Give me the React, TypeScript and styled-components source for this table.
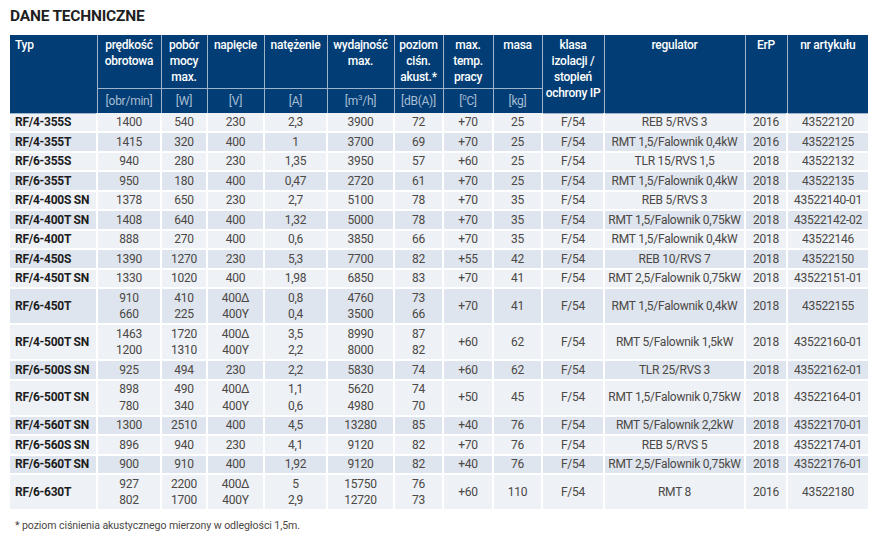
import React from 'react';
import styled, { createGlobalStyle } from 'styled-components';

type Val = string | [string, string];

interface Row {
  typ: string;
  cells: Val[];
}

const widths = [87, 64, 46, 57, 63, 67, 49, 50, 49, 62, 141, 42, 81];

const rows: Row[] = [
  { typ: 'RF/4-355S', cells: ['1400', '540', '230', '2,3', '3900', '72', '+70', '25', 'F/54', 'REB 5/RVS 3', '2016', '43522120'] },
  { typ: 'RF/4-355T', cells: ['1415', '320', '400', '1', '3700', '69', '+70', '25', 'F/54', 'RMT 1,5/Falownik 0,4kW', '2016', '43522125'] },
  { typ: 'RF/6-355S', cells: ['940', '280', '230', '1,35', '3950', '57', '+60', '25', 'F/54', 'TLR 15/RVS 1,5', '2018', '43522132'] },
  { typ: 'RF/6-355T', cells: ['950', '180', '400', '0,47', '2720', '61', '+70', '25', 'F/54', 'RMT 1,5/Falownik 0,4kW', '2018', '43522135'] },
  { typ: 'RF/4-400S SN', cells: ['1378', '650', '230', '2,7', '5100', '78', '+70', '35', 'F/54', 'REB 5/RVS 3', '2018', '43522140-01'] },
  { typ: 'RF/4-400T SN', cells: ['1408', '640', '400', '1,32', '5000', '78', '+70', '35', 'F/54', 'RMT 1,5/Falownik 0,75kW', '2018', '43522142-02'] },
  { typ: 'RF/6-400T', cells: ['888', '270', '400', '0,6', '3850', '66', '+70', '35', 'F/54', 'RMT 1,5/Falownik 0,4kW', '2018', '43522146'] },
  { typ: 'RF/4-450S', cells: ['1390', '1270', '230', '5,3', '7700', '82', '+55', '42', 'F/54', 'REB 10/RVS 7', '2018', '43522150'] },
  { typ: 'RF/4-450T SN', cells: ['1330', '1020', '400', '1,98', '6850', '83', '+70', '41', 'F/54', 'RMT 2,5/Falownik 0,75kW', '2018', '43522151-01'] },
  {
    typ: 'RF/6-450T',
    cells: [['910', '660'], ['410', '225'], ['400Δ', '400Y'], ['0,8', '0,4'], ['4760', '3500'], ['73', '66'], '+70', '41', 'F/54', 'RMT 1,5/Falownik 0,4kW', '2018', '43522155'],
  },
  {
    typ: 'RF/4-500T SN',
    cells: [['1463', '1200'], ['1720', '1310'], ['400Δ', '400Y'], ['3,5', '2,2'], ['8990', '8000'], ['87', '82'], '+60', '62', 'F/54', 'RMT 5/Falownik 1,5kW', '2018', '43522160-01'],
  },
  { typ: 'RF/6-500S SN', cells: ['925', '494', '230', '2,2', '5830', '74', '+60', '62', 'F/54', 'TLR 25/RVS 3', '2018', '43522162-01'] },
  {
    typ: 'RF/6-500T SN',
    cells: [['898', '780'], ['490', '340'], ['400Δ', '400Y'], ['1,1', '0,6'], ['5620', '4980'], ['74', '70'], '+50', '45', 'F/54', 'RMT 1,5/Falownik 0,75kW', '2018', '43522164-01'],
  },
  { typ: 'RF/4-560T SN', cells: ['1300', '2510', '400', '4,5', '13280', '85', '+40', '76', 'F/54', 'RMT 5/Falownik 2,2kW', '2018', '43522170-01'] },
  { typ: 'RF/6-560S SN', cells: ['896', '940', '230', '4,1', '9120', '82', '+70', '76', 'F/54', 'REB 5/RVS 5', '2018', '43522174-01'] },
  { typ: 'RF/6-560T SN', cells: ['900', '910', '400', '1,92', '9120', '82', '+40', '76', 'F/54', 'RMT 2,5/Falownik 0,75kW', '2018', '43522176-01'] },
  {
    typ: 'RF/6-630T',
    cells: [['927', '802'], ['2200', '1700'], ['400Δ', '400Y'], ['5', '2,9'], ['15750', '12720'], ['76', '73'], '+60', '110', 'F/54', 'RMT 8', '2016', '43522180'],
  },
];

export default function App() {
  return (
    <>
      <GlobalStyle />
      <Page>
        <Title>DANE TECHNICZNE</Title>
        <Table>
          <colgroup>
            {widths.map((w, i) => (
              <col key={i} style={{ width: w }} />
            ))}
          </colgroup>
          <thead>
            <tr>
              <HeadCell rowSpan={2} $left>
                Typ
              </HeadCell>
              <HeadCell>
                prędkość
                <br />
                obrotowa
              </HeadCell>
              <HeadCell>
                pobór
                <br />
                mocy
                <br />
                max.
              </HeadCell>
              <HeadCell>napięcie</HeadCell>
              <HeadCell>natężenie</HeadCell>
              <HeadCell>
                wydajność
                <br />
                max.
              </HeadCell>
              <HeadCell>
                poziom
                <br />
                ciśn.
                <br />
                akust.*
              </HeadCell>
              <HeadCell>
                max.
                <br />
                temp.
                <br />
                pracy
              </HeadCell>
              <HeadCell>masa</HeadCell>
              <HeadCell rowSpan={2}>
                klasa
                <br />
                izolacji /
                <br />
                stopień
                <br />
                ochrony IP
              </HeadCell>
              <HeadCell rowSpan={2}>regulator</HeadCell>
              <HeadCell rowSpan={2}>ErP</HeadCell>
              <HeadCell rowSpan={2}>nr artykułu</HeadCell>
            </tr>
            <tr>
              <UnitCell>[obr/min]</UnitCell>
              <UnitCell>[W]</UnitCell>
              <UnitCell>[V]</UnitCell>
              <UnitCell>[A]</UnitCell>
              <UnitCell>
                [m<sup>3</sup>/h]
              </UnitCell>
              <UnitCell>[dB(A)]</UnitCell>
              <UnitCell>
                [<sup>0</sup>C]
              </UnitCell>
              <UnitCell>[kg]</UnitCell>
            </tr>
          </thead>
          <tbody>
            {rows.map((r, i) => (
              <BodyRow key={r.typ} $alt={i % 2 === 1}>
                <TypeCell>{r.typ}</TypeCell>
                {r.cells.map((c, j) => (
                  <Cell key={j}>
                    {Array.isArray(c) ? (
                      <>
                        <Line>{c[0]}</Line>
                        <Line>{c[1]}</Line>
                      </>
                    ) : (
                      c
                    )}
                  </Cell>
                ))}
              </BodyRow>
            ))}
          </tbody>
        </Table>
        <Footnote>* poziom ciśnienia akustycznego mierzony w odległości 1,5m.</Footnote>
      </Page>
    </>
  );
}

const GlobalStyle = createGlobalStyle`
  html, body {
    margin: 0;
    padding: 0;
    background: #fff;
  }
  body {
    font-family: Roboto, "Noto Sans", Arial, sans-serif;
  }
`;

const Page = styled.div`
  width: 879px;
  height: 539px;
  padding: 7px 0 0 10px;
  box-sizing: border-box;
  overflow: hidden;
`;

const Title = styled.h1`
  margin: 0 0 10px;
  font-size: 15.5px;
  line-height: 18px;
  font-weight: 700;
  color: #1f1f1f;
  letter-spacing: -0.2px;
`;

const Table = styled.table`
  width: 858px;
  table-layout: fixed;
  border-collapse: collapse;
  border-bottom: 2px solid #7d98b6;
  font-size: 12px;
  letter-spacing: -0.25px;
`;

const HeadCell = styled.th<{ $left?: boolean }>`
  background: #023e75;
  color: #fff;
  font-weight: 500;
  line-height: 16px;
  height: 48px;
  padding: 2px 2px 3px ${(p) => (p.$left ? '5px' : '2px')};
  text-align: ${(p) => (p.$left ? 'left' : 'center')};
  vertical-align: top;
  border: 1.5px solid #9fb4cb;
  border-top: none;
  &:first-child {
    border-left: none;
  }
  &:last-child {
    border-right: none;
  }
`;

const UnitCell = styled.th`
  background: #023e75;
  color: #a9bdd4;
  font-weight: 400;
  line-height: 16px;
  height: 20px;
  padding: 2px;
  text-align: center;
  vertical-align: middle;
  border: 1.5px solid #9fb4cb;
  border-bottom: none;

  sup {
    font-size: 8px;
    line-height: 0;
    vertical-align: 5px;
  }
`;

const BodyRow = styled.tr<{ $alt: boolean }>`
  background: ${(p) => (p.$alt ? '#dfe5ee' : '#eef1f6')};
`;

const Cell = styled.td`
  color: #4b4845;
  line-height: 16.5px;
  padding: 0.5px 2px;
  text-align: center;
  vertical-align: middle;
  white-space: nowrap;
  border: 2px solid #fff;
  border-top: none;
  &:last-child {
    border-right: none;
  }
`;

const TypeCell = styled(Cell)`
  color: #1d1d1d;
  font-weight: 700;
  text-align: left;
  padding-left: 5px;
  border-left: none;
`;

const Line = styled.div`
  display: block;
`;

const Footnote = styled.p`
  margin: 8px 0 0 5px;
  font-size: 10.6px;
  color: #4b4845;
  letter-spacing: -0.1px;
`;
